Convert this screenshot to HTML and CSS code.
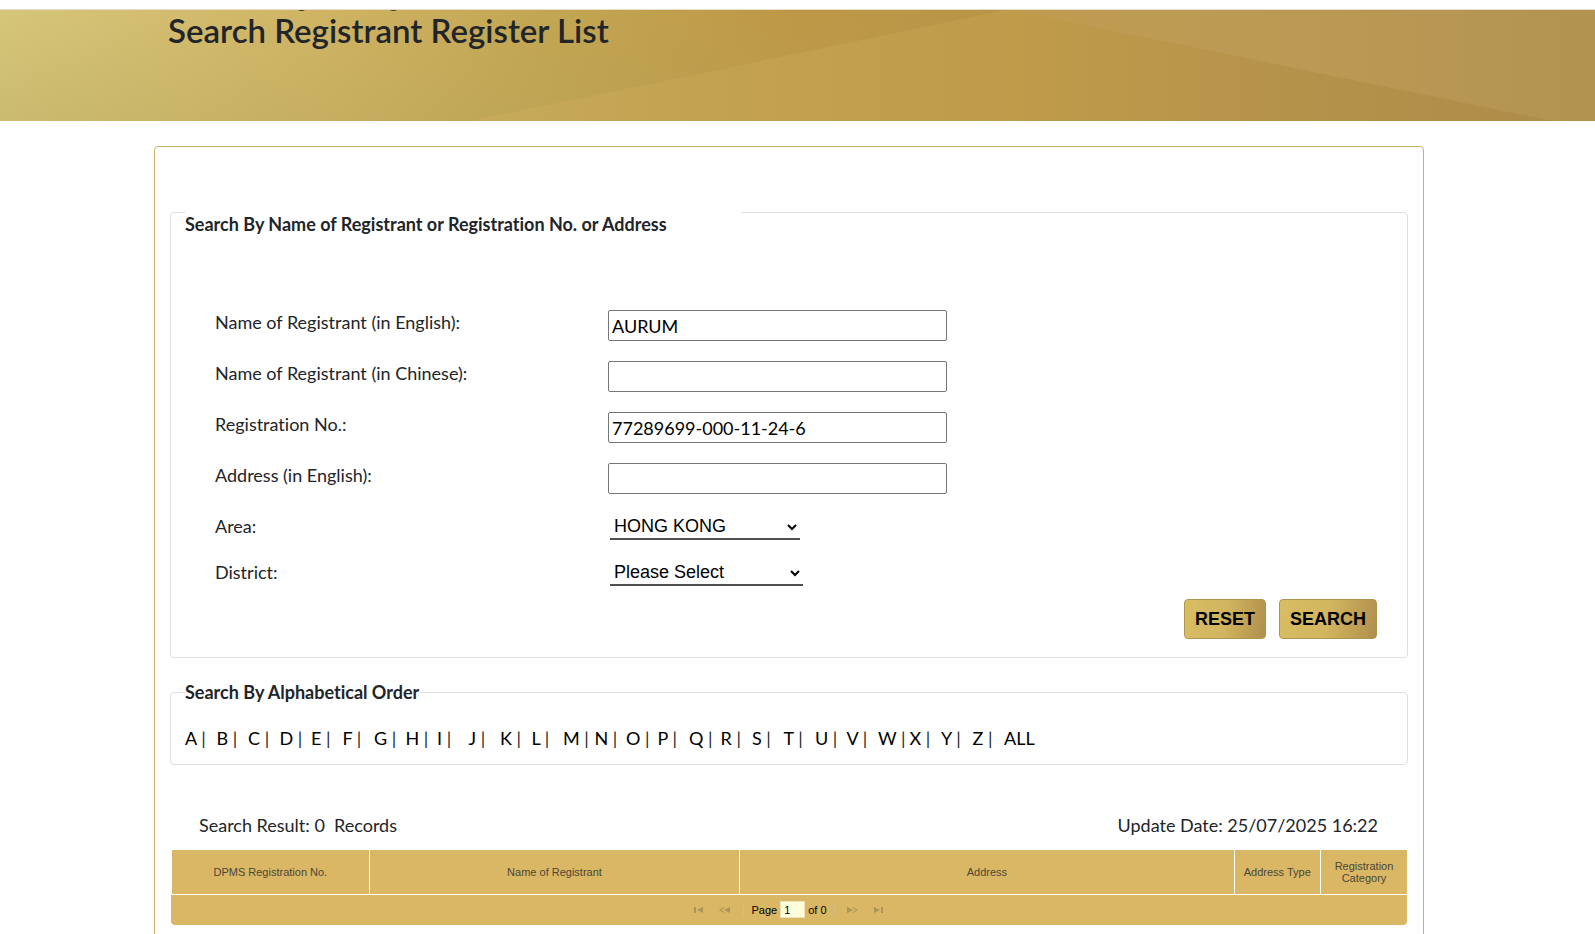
FILE: index.html
```html
<!DOCTYPE html>
<html lang="en">
<head>
<meta charset="utf-8">
<title>Search Registrant Register List</title>
<link rel="stylesheet" href="styles.css">
</head>
<body>
<div class="topbar"></div>
<header class="banner">
  <svg class="banner-art" viewBox="0 0 1595 111" preserveAspectRatio="none" aria-hidden="true">
    <defs>
      <linearGradient id="base" x1="0" y1="0" x2="1" y2="0">
        <stop offset="0" stop-color="#d6c67a"/>
        <stop offset=".2" stop-color="#d0b464"/>
        <stop offset=".34" stop-color="#c3a653"/>
        <stop offset=".5" stop-color="#be9846"/>
        <stop offset=".62" stop-color="#b89548"/>
      </linearGradient>
      <linearGradient id="shade" x1="0" y1="0" x2="0" y2="1">
        <stop offset="0" stop-color="#b0a058" stop-opacity="0"/>
        <stop offset="1" stop-color="#b0a058" stop-opacity=".3"/>
      </linearGradient>
      <linearGradient id="mid" gradientUnits="userSpaceOnUse" x1="470" y1="0" x2="1560" y2="0">
        <stop offset="0" stop-color="#c7ab5b"/>
        <stop offset=".25" stop-color="#c2a150"/>
        <stop offset=".5" stop-color="#bf9b4a"/>
        <stop offset=".7" stop-color="#b7944a"/>
        <stop offset="1" stop-color="#ae8c4a"/>
      </linearGradient>
      <linearGradient id="right" gradientUnits="userSpaceOnUse" x1="1010" y1="0" x2="1595" y2="0">
        <stop offset="0" stop-color="#c09c50"/>
        <stop offset=".5" stop-color="#bb9a55"/>
        <stop offset="1" stop-color="#b29350"/>
      </linearGradient>
    </defs>
    <rect width="1595" height="111" fill="url(#base)"/>
    <rect width="1595" height="111" fill="url(#shade)"/>
    <path d="M470 111L800 43L1005 0H1020L1555 111Z" fill="url(#mid)"/>
    <path d="M1012 0H1595V111H1553Z" fill="url(#right)"/>
    <path d="M298 0h7l-2 1h-3zM390 0h7l-2 1h-3z" fill="#4a4432"/>
  </svg>
  <h1 class="banner-title">Search Registrant Register List</h1>
</header>
<main class="card">
  <form class="search">
    <fieldset class="group group-form">
      <legend class="legend legend-wide">Search By Name of Registrant or Registration No. or Address</legend>
      <div class="rows">
        <div class="row"><label for="en">Name of Registrant (in English):</label><input class="text" id="en" type="text" value="AURUM"></div>
        <div class="row"><label for="zh">Name of Registrant (in Chinese):</label><input class="text" id="zh" type="text"></div>
        <div class="row"><label for="no">Registration No.:</label><input class="text" id="no" type="text" value="77289699-000-11-24-6"></div>
        <div class="row"><label for="ad">Address (in English):</label><input class="text" id="ad" type="text"></div>
        <div class="row row-select"><label for="area">Area:</label><select class="select" id="area"><option>HONG KONG</option></select></div>
        <div class="row row-select"><label for="district">District:</label><select class="select select-wide" id="district"><option>Please Select</option></select></div>
      </div>
      <div class="actions"><button class="btn" type="reset">RESET</button><button class="btn" type="submit">SEARCH</button></div>
    </fieldset>
  </form>
  <fieldset class="group group-letters">
    <legend class="legend">Search By Alphabetical Order</legend>
    <ul class="letters">
      <li><a href="#">A</a> |</li><li><a href="#">B</a> |</li><li><a href="#">C</a> |</li><li><a href="#">D</a> |</li><li><a href="#">E</a> |</li><li><a href="#">F</a> |</li><li><a href="#">G</a> |</li><li><a href="#">H</a> |</li><li><a href="#">I</a> |</li><li><a href="#">J</a> |</li><li><a href="#">K</a> |</li><li><a href="#">L</a> |</li><li><a href="#">M</a> |</li><li><a href="#">N</a> |</li><li><a href="#">O</a> |</li><li><a href="#">P</a> |</li><li><a href="#">Q</a> |</li><li><a href="#">R</a> |</li><li><a href="#">S</a> |</li><li><a href="#">T</a> |</li><li><a href="#">U</a> |</li><li><a href="#">V</a> |</li><li><a href="#">W</a> |</li><li><a href="#">X</a> |</li><li><a href="#">Y</a> |</li><li><a href="#">Z</a> |</li><li><a href="#">ALL</a></li>
    </ul>
  </fieldset>
  <section class="results">
    <div class="summary"><span>Search Result: 0&nbsp; Records</span><span>Update Date: 25/07/2025 16:22</span></div>
    <table class="grid">
      <colgroup><col class="c-no"><col class="c-name"><col class="c-address"><col class="c-type"><col class="c-cat"></colgroup>
      <thead><tr><th>DPMS Registration No.</th><th>Name of Registrant</th><th>Address</th><th>Address Type</th><th>Registration Category</th></tr></thead>
    </table>
    <nav class="pager" aria-label="Pages">
      <button class="page-btn" type="button" aria-label="First page"><svg width="10" height="6" viewBox="0 0 10 6"><path d="M0 0h2v6H0zM9 0v6L3 3z"/></svg></button>
      <button class="page-btn" type="button" aria-label="Previous page"><svg width="12" height="6" viewBox="0 0 12 6"><path d="M5 0v1L2 3l3 2v1L0 3zM11 0v6L5 3z"/></svg></button>
      <span class="bar"></span>
      <label class="page-label" for="page">Page</label><input class="page-input" id="page" type="text" value="1"><span>of 0</span>
      <span class="bar bar-after"></span>
      <button class="page-btn" type="button" aria-label="Next page"><svg width="12" height="6" viewBox="0 0 12 6"><path d="M0 0v6l6-3zM6 0v1l3 2-3 2v1l5-3z"/></svg></button>
      <button class="page-btn" type="button" aria-label="Last page"><svg width="10" height="6" viewBox="0 0 10 6"><path d="M0 0v6l6-3zM7 0h2v6H7z"/></svg></button>
    </nav>
  </section>
</main>
</body>
</html>
```
FILE: styles.css
```css
* { box-sizing: border-box; }
html { overflow: hidden; }
body { margin: 0; background: #fff; color: #212529; font: 18px/27px Lato, "Liberation Sans", sans-serif; font-variant-ligatures: none; }
.topbar { height: 10px; border-bottom: 1px solid #e2dcd3; }
.banner { position: relative; height: 111px; overflow: hidden; padding-left: 168px; }
.banner-art { position: absolute; inset: 0; width: 100%; height: 100%; }
.banner-title { position: relative; margin: 0; font-size: 33px; line-height: 40px; font-weight: 600; }
.card { margin: 25px 171px 0 154px; padding: 41px 15px 24px; border: 1px solid #cdb368; border-radius: 4px; }
.group { min-width: 0; margin: 0; padding: 0 14px; border: 1px solid #e0e0e4; border-radius: 4px; }
.legend { padding: 0; font-size: 18px; line-height: 24px; font-weight: 700; }
.legend-wide { width: 556px; padding-top: 24px; }
.rows { padding: 74px 30px 0; }
.row { display: flex; align-items: flex-start; height: 51px; }
.row label { width: 393px; line-height: 25px; }
.text { width: 339px; height: 31px; padding: 1px 3px; border: 1px solid #767676; border-radius: 2px; background: #fff; color: #000; font: 18px/27px Lato, sans-serif; }
.row-select { height: 46px; }
.row-select:last-child { height: 39px; }
.select { width: 190px; height: 26px; margin-left: 2px; padding: 0; border: 0; border-bottom: 2px solid #4f4f4f; background: transparent; color: #000; font: 18px/24px "Liberation Sans", sans-serif; }
.select-wide { width: 193px; }
.actions { display: flex; justify-content: flex-end; gap: 13px; padding: 0 16px 18px; }
.btn { height: 40px; padding: 0 10px; border: 1px solid #b09550; border-radius: 4px; background: linear-gradient(100deg, #d8bd63 0%, #d2b55f 50%, #b08f4d 100%); color: #000; font: bold 18px/24px "Liberation Sans", sans-serif; }
.group-letters { margin-top: 22px; }
.letters { display: flex; width: 70.4%; margin: 0; padding: 21px 0 12px; list-style: none; }
.letters li { flex: 1 1 0; white-space: nowrap; }
.letters a { color: #000; text-decoration: none; }
.results { padding: 0 1px; }
.summary { display: flex; justify-content: space-between; padding: 47px 29px 11px 28px; }
.grid { width: 100%; table-layout: fixed; border-collapse: collapse; font: 11px/12px "Liberation Sans", sans-serif; }
.grid th { height: 44px; padding: 0 8px; border-right: 1px solid #fff; border-bottom: 1px solid #fff; background: #dab765; color: #4b4637; font-weight: 400; }
.grid th:first-child { border-left: 1px solid #fff; }
.grid th:last-child { border-right: 0; }
.c-no { width: 16%; }
.c-name { width: 30%; }
.c-address { width: 40%; }
.c-type { width: 7%; }
.c-cat { width: 7%; }
.pager { display: flex; align-items: center; justify-content: center; height: 30px; border-radius: 0 0 4px 4px; background: #dab765; color: #000; font: 11px/16px "Liberation Sans", sans-serif; }
.page-btn { display: flex; width: 26px; padding: 0; border: 0; background: none; justify-content: center; }
.page-btn svg { fill: #ae9359; }
.bar { width: 1px; height: 12px; margin: 0 7px 0 5px; background: #d2bd8c; }
.bar-after { margin: 0 5px 0 7px; }
.page-input { width: 25px; height: 17px; margin: 0 3px; padding: 0 3px; border: 1px solid #f0e3bb; background: #ffffdc; font: 11px/15px "Liberation Sans", sans-serif; }
```
